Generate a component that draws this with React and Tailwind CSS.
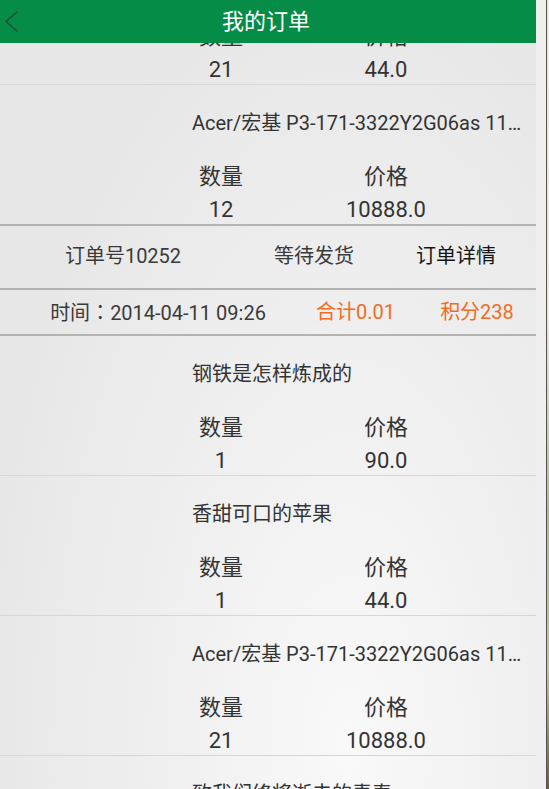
import React from "react";

const FONT = { fontFamily: 'Roboto, "Noto Sans CJK SC", sans-serif' };

function Item({ title, qty, price, thick }) {
  return (
    <div
      className={
        thick
          ? "h-[141px] border-b-2 border-[#b3b3b3]"
          : "h-[140px] border-b border-[#d7d7d7]"
      }
    >
      <div className="h-[139px] pt-[24px] text-[#333333]">
        <div className="h-[28px] whitespace-nowrap pl-[192px] text-[20px] leading-[28px]">
          {title}
        </div>
        <div className="mt-[27px] flex h-[26px] text-[22px] leading-[26px]">
          <span className="ml-[181px] w-[80px] text-center">数量</span>
          <span className="ml-[85px] w-[80px] text-center">价格</span>
        </div>
        <div className="mt-[7px] flex h-[26px] text-[22px] leading-[26px]">
          <span className="ml-[181px] w-[80px] text-center">{qty}</span>
          <span className="ml-[85px] w-[80px] text-center">{price}</span>
        </div>
      </div>
    </div>
  );
}

function OrderHeader() {
  return (
    <div className="text-[20px] text-[#3a3a3a]">
      <div className="flex h-[64px] items-center border-b-2 border-[#b3b3b3] pb-[2px]">
        <span className="w-[246px] text-center">订单号10252</span>
        <span className="w-[136px] text-center">等待发货</span>
        <span className="w-[148px] text-center text-[#151515]">订单详情</span>
      </div>
      <div className="flex h-[46px] items-center border-b-2 border-[#b3b3b3]">
        <span className="w-[316px] whitespace-nowrap text-center">
          时间
          <span className="font-['Noto_Sans_CJK_TC',sans-serif]">：</span>
          2014-04-11 09:26
        </span>
        <span className="w-[76px] whitespace-nowrap text-center text-[#f26c20]">合计0.01</span>
        <span className="ml-[35px] w-[100px] whitespace-nowrap text-center text-[#f26c20]">积分238</span>
      </div>
    </div>
  );
}

export default function App() {
  return (
    <div className="flex h-[789px] w-[549px] overflow-hidden bg-white" style={FONT}>
      <div className="flex h-full w-[536px] flex-col bg-[radial-gradient(ellipse_at_65%_95%,#f9f9f9_0%,#f0f0f0_35%,#e7e7e7_75%)]">
        <header className="relative flex h-[43px] shrink-0 items-center justify-center bg-[#058c47]">
          <svg
            className="absolute left-[3px] top-[10px]"
            width="16"
            height="24"
            viewBox="0 0 16 24"
            fill="none"
          >
            <path d="M14 2 L3 11.5 L14 21" stroke="#1d4f35" strokeWidth="1.6" strokeLinecap="round" strokeLinejoin="round" />
          </svg>
          <h1 className="pr-[4px] text-[22px] leading-none text-white">我的订单</h1>
        </header>
        <div className="flex-1 overflow-hidden">
          <div className="-mt-[98px]">
            <Item title="香甜可口的苹果" qty="21" price="44.0" />
            <Item title="Acer/宏基 P3-171-3322Y2G06as 11…" qty="12" price="10888.0" thick />
            <OrderHeader />
            <Item title="钢铁是怎样炼成的" qty="1" price="90.0" />
            <Item title="香甜可口的苹果" qty="1" price="44.0" />
            <Item title="Acer/宏基 P3-171-3322Y2G06as 11…" qty="21" price="10888.0" />
            <Item title="致我们终将逝去的青春" qty="1" price="30.0" />
          </div>
        </div>
      </div>
      <div className="h-full w-[10px] bg-[#efefef]" />
      <div className="h-full w-px bg-[#57524c]" />
      <div className="h-full flex-1 bg-[linear-gradient(to_bottom,#f3e4de_0%,#efe6de_40%,#a9bf8f_65%,#c9c0a0_85%,#6f5a3e_100%)]" />
    </div>
  );
}
